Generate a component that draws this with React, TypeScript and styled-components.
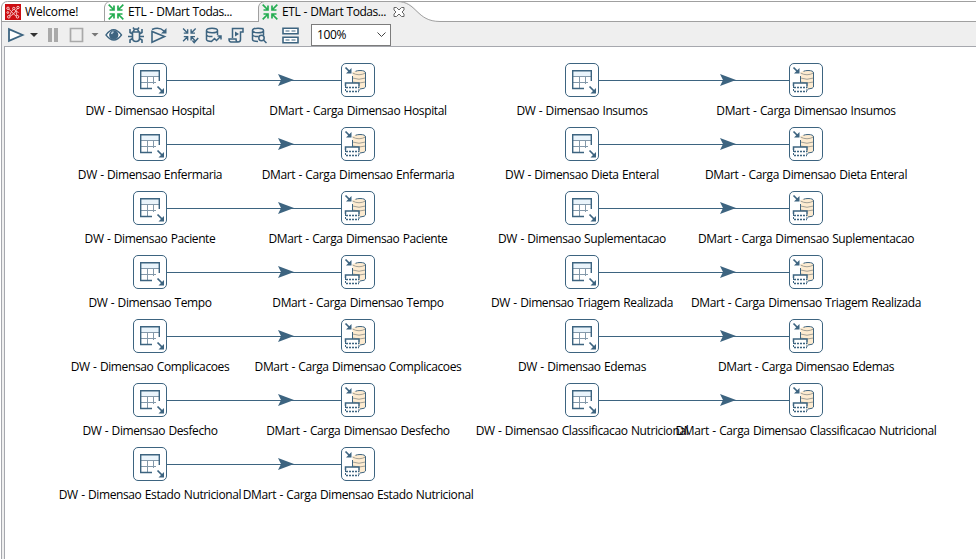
import React from 'react';
import styled, { createGlobalStyle } from 'styled-components';

const ink = '#3d6480';

const GlobalStyle = createGlobalStyle`
  * { box-sizing: border-box; }
  body { margin: 0; overflow: hidden; background: #fff; color: #000; font: 12px/16px "Open Sans", "Noto Sans", sans-serif; }
  svg { display: block; }
`;

const Window = styled.div`
  width: 976px;
  height: 559px;
  display: flex;
  flex-direction: column;
  background: #fff;
`;

const TabBar = styled.div`
  position: relative;
  height: 22px;
  flex: none;
  display: flex;
  padding-left: 1px;
`;

const TabOutline = styled.svg`
  position: absolute;
  inset: 0;
`;

const Tab = styled.div<{ $width: number }>`
  position: relative;
  width: ${p => p.$width}px;
  display: flex;
  align-items: center;
  gap: 4px;
  padding: 2px 0 0 4px;
`;

const TabTitle = styled.span<{ $spacing: number }>`
  letter-spacing: ${p => p.$spacing}px;
  word-spacing: 0.6px;
  white-space: pre;
`;

const CloseIcon = styled.svg`
  margin-left: 3px;
`;

const Frame = styled.div`
  flex: 1;
  min-height: 0;
  margin-left: 1px;
  padding-left: 2px;
  background: #efefef;
  border-left: 1px solid #a6a8ae;
  display: flex;
  flex-direction: column;
`;

const Toolbar = styled.div`
  height: 24px;
  flex: none;
  display: flex;
  align-items: center;
  padding: 2px 0 0 3px;
`;

const Tool = styled.svg<{ $gap?: number }>`
  flex: none;
  margin-right: ${p => p.$gap ?? 0}px;
`;

const ZoomSelect = styled.div`
  width: 80px;
  height: 22px;
  border: 1px solid #7c7c7c;
  background: #fff;
  display: flex;
  align-items: center;
  justify-content: space-between;
  padding: 0 4px 1px 5px;
  letter-spacing: -0.4px;
`;

const Canvas = styled.div`
  position: relative;
  flex: 1;
  overflow: hidden;
  background: #fff;
  border-left: 1px solid #a6a8ae;
  border-top: 1px solid #a6a8ae;
`;

const Hop = styled.svg<{ $x: number; $y: number }>`
  position: absolute;
  left: ${p => p.$x}px;
  top: ${p => p.$y}px;
`;

const Step = styled.div<{ $x: number; $y: number }>`
  position: absolute;
  left: ${p => p.$x}px;
  top: ${p => p.$y}px;
  width: 34px;
  display: flex;
  flex-direction: column;
  align-items: center;
  gap: 6px;
`;

const StepBox = styled.div`
  width: 34px;
  height: 34px;
  flex: none;
  border: 1px solid ${ink};
  border-radius: 5px;
  background: #fff;
`;

const StepLabel = styled.span`
  white-space: pre;
  letter-spacing: -0.38px;
  word-spacing: 0.6px;
`;

const PentahoIcon = () => (
  <svg width="16" height="16" viewBox="0 0 16 16">
    <path fill="#cc0d12" d="M0 0h16v16H0z" />
    <g stroke="#f6c9c9" strokeWidth=".9" fill="none">
      <path d="M3 4.500l3.500 3 2.300-2.500 2 2 2.200-3.500M6.500 7.500L4 12.800M6.500 7.500l2 2.500L4 12.800M8.500 10l2.300-3 1.500 5.800L8.500 10M10.800 7l2.700 1.500" />
    </g>
    <g fill="#cc0d12" stroke="#fbe3e3" strokeWidth=".9">
      <circle cx="3" cy="4.300" r="1.200" /><circle cx="8.800" cy="4.500" r="1.200" /><circle cx="13" cy="3.500" r="1.200" />
      <circle cx="3.800" cy="12.800" r="1.300" /><circle cx="12.500" cy="12.800" r="1.300" /><circle cx="2.800" cy="8.500" r=".9" />
    </g>
  </svg>
);

const Converge = () => (
  <path
    fill="none"
    d="M.7.7l4.800 4.800M15.300.7l-4.800 4.800M.7 15.300l4.800-4.800M15.300 15.300l-4.800-4.800M6 1.500V6H1.500M10 1.500V6h4.500M6 14.500V10H1.500M10 14.500V10h4.500"
  />
);

const TransIcon = () => (
  <svg width="16" height="16" viewBox="0 0 16 16" stroke="#24ad51" strokeWidth="1.700"><Converge /></svg>
);

const TableInput = () => (
  <svg width="32" height="32" fill="none">
    <path d="M7 7h18v5H7z" fill="#eaf4fb" />
    <path d="M7 12.500h18M7 18.500h15M13.500 12v12M19.500 12v8" stroke="#8499aa" />
    <path d="M18 24.500H6.700V6.700h18.600V17" stroke={ink} strokeWidth="1.400" />
    <path d="M23.500 22.500l5 5" stroke={ink} strokeWidth="1.700" />
    <path d="M30 24v5.500h-5.500z" fill={ink} />
  </svg>
);

const Loader = () => (
  <svg width="32" height="32" fill="none">
    <path d="M10.500 9q0-2.500 6.500-2.500T23.500 9v14q-2 2-7 2h-6z" fill="#fdebd0" />
    <path d="M10.500 9q6.500 3.500 13 0M10.500 14q6.500 2.500 13 0M10.500 18q6.500 2 13 0" stroke="#a3a197" />
    <path d="M13.500 7.300q2-.8 4.500-.8 5.500 0 5.500 2.500v14q0 1.500-5.500 2M10.500 12v7" stroke={ink} />
    <path d="M4 19.500h13v9H4z" fill="#fff" />
    <path d="M3.500 22v-3H17v3" stroke={ink} strokeWidth="1.500" />
    <path d="M4 23.500h13M4 27.500h13" stroke={ink} strokeWidth="1.300" strokeDasharray="2 1" />
    <path d="M3.500 22v6M17 22v6" stroke={ink} strokeDasharray="2 1" />
    <path d="M3.500 3.500l4 4" stroke={ink} strokeWidth="1.700" />
    <path d="M9.500 4v5.500H4z" fill={ink} />
  </svg>
);

const Database = () => (
  <path d="M1.500 3.500q0-2.300 5.500-2.300t5.500 2.300-5.500 2.200-5.500-2.200v9q0 1.800 5.500 2M12.500 3.500V8M1.500 8q1 1.800 6 1.600" />
);

const names: [string[], string[]] = [
  ['Hospital', 'Enfermaria', 'Paciente', 'Tempo', 'Complicacoes', 'Desfecho', 'Estado Nutricional'],
  ['Insumos', 'Dieta Enteral', 'Suplementacao', 'Triagem Realizada', 'Edemas', 'Classificacao Nutricional'],
];

const columns = [
  { source: 128, target: 336, arrow: 111 },
  { source: 560, target: 784, arrow: 121 },
];

function Flow({ name, row, column }: { name: string; row: number; column: number }) {
  const { source, target, arrow } = columns[column];
  const y = 16 + row * 64;
  const length = target - source - 34;
  return (
    <>
      <Hop $x={source + 34} $y={y + 10} width={length} height="14">
        <path d={`M0 7.500H${length}`} stroke={ink} strokeWidth="1.200" />
        <path d={`M${arrow} 1l16 6-16 6 3-6z`} fill={ink} />
      </Hop>
      <Step $x={source} $y={y}>
        <StepBox><TableInput /></StepBox>
        <StepLabel>{`DW - Dimensao ${name}`}</StepLabel>
      </Step>
      <Step $x={target} $y={y}>
        <StepBox><Loader /></StepBox>
        <StepLabel>{`DMart - Carga Dimensao ${name}`}</StepLabel>
      </Step>
    </>
  );
}

export default function App() {
  return (
    <>
      <GlobalStyle />
      <Window>
        <TabBar>
          <TabOutline width="976" height="22" fill="none" stroke="#a0a0a0">
            <path d="M259 22V7q1-5.500 6-5.500h136c16 0 17 20 38 20H976v.5z" fill="#efefef" stroke="none" />
            <path d="M1.500 22V7q1-5.500 6-5.500H976M104.500 21V7q1-5 5-5.500M2 21.500h257M258.500 22V7q1-5 6-5.500M397 1.500c20 0 19 20 43 20H976" />
          </TabOutline>
          <Tab $width={103}><PentahoIcon /><TabTitle $spacing={-0.2}>Welcome!</TabTitle></Tab>
          <Tab $width={154}><TransIcon /><TabTitle $spacing={-0.45}>ETL - DMart Todas...</TabTitle></Tab>
          <Tab $width={180}>
            <TransIcon /><TabTitle $spacing={-0.45}>ETL - DMart Todas...</TabTitle>
            <CloseIcon width="12" height="12" fill="#fff" stroke="#666">
              <path d="M1 1.500h2.500L6 4l2.500-2.500H11V4L9 6l2 2v2.500H8.500L6 8l-2.500 2.500H1V8l2-2-2-2z" />
            </CloseIcon>
          </Tab>
        </TabBar>
        <Frame>
          <Toolbar>
            <Tool width="18" height="16" $gap={5} fill="#fff" stroke={ink} strokeWidth="1.800"><path d="M2 2.200v11.600L15.500 8z" /></Tool>
            <Tool width="8" height="16" $gap={9}><path d="M0 6h8l-4 4z" fill="#333" /></Tool>
            <Tool width="16" height="16" $gap={6}><path d="M1 1h4v14H1zM7 1h4v14H7z" fill="#a9a9a9" /></Tool>
            <Tool width="15" height="16" $gap={7} fill="none" stroke="#a9a9a9" strokeWidth="1.700"><path d="M1.500 1.500h12v13h-12z" /></Tool>
            <Tool width="8" height="16" $gap={6}><path d="M.5 6h7L4 9.500z" fill="#777" /></Tool>
            <Tool width="18" height="16" $gap={5} fill="#fff" stroke={ink} strokeWidth="1.300">
              <path d="M1 8q7.500-10.500 15.500 0Q9 18 1 8z" /><circle cx="8.800" cy="8" r="4" fill={ink} /><path d="M6.500 7q.5-2 2-2" stroke="#bdd0dd" />
            </Tool>
            <Tool width="16" height="16" $gap={6} fill="none" stroke={ink} strokeWidth="1.600">
              <path d="M4.500 5h7v6q0 3.500-3.500 3.500T4.500 11zM5.500 5q0-3 2.500-3t2.500 3M4.500 7L2 5.500V2M11.500 7L14 5.500V2M4.500 9.500H0M11.500 9.500H16M4.500 11.500L2 13v3M11.500 11.500L14 13v3M5 .5l1.500 2M11 .5l-1.500 2" />
            </Tool>
            <Tool width="18" height="17" $gap={14} fill="none" stroke={ink} strokeWidth="1.600">
              <path d="M2 4.500v10.700L14.500 9.500zM2 2.500Q9-.5 14 4" /><path d="M16.500 1v5.500H11z" fill={ink} stroke="none" />
            </Tool>
            <Tool width="17" height="17" $gap={6} stroke={ink}>
              <g transform="translate(.5 1) scale(.86)" strokeWidth="1.600"><Converge /></g>
              <path d="M10.500 13.500l1.700 2 4-4.500" fill="none" strokeWidth="1.500" />
            </Tool>
            <Tool width="17" height="17" $gap={6} fill="none" stroke={ink} strokeWidth="1.500">
              <Database /><path d="M6.500 14.500l3-3 2 2 4-4M12.500 9H16v3.500" />
            </Tool>
            <Tool width="17" height="17" $gap={6} fill="none" stroke={ink} strokeWidth="1.500">
              <path d="M4.500 11V1.500H15V5h-2.500v7.500q0 2.500-2.500 2.500H3q-2 0-2-3h7q0 3 2 3" /><path d="M7 4.500v5L11 7z" fill={ink} stroke="none" />
            </Tool>
            <Tool width="17" height="17" $gap={14} fill="none" stroke={ink} strokeWidth="1.500">
              <Database /><circle cx="10.500" cy="11" r="2.700" /><path d="M12.500 13l3 3" />
            </Tool>
            <Tool width="18" height="17" $gap={11} fill="#fff" stroke={ink} strokeWidth="1.600">
              <path d="M1 1.300h15v5.400H1zM1 10.300h15v5.400H1z" />
              <path d="M3.500 4h4M9.500 4h4M3.500 13h4M9.500 13h4" strokeWidth="1.200" />
            </Tool>
            <ZoomSelect>
              100%
              <svg width="9" height="6" fill="none" stroke="#444"><path d="M.5.5l4 4 4-4" /></svg>
            </ZoomSelect>
          </Toolbar>
          <Canvas>
            {names.map((group, column) => group.map((name, row) => (
              <Flow key={name} name={name} row={row} column={column} />
            )))}
          </Canvas>
        </Frame>
      </Window>
    </>
  );
}
